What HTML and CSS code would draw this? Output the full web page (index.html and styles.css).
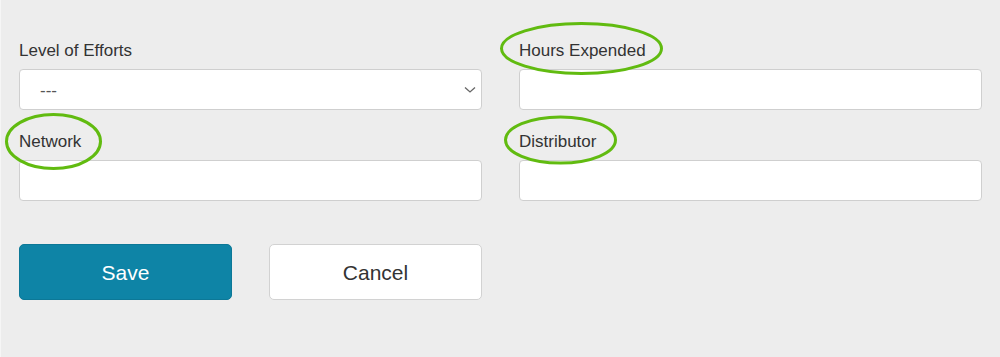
FILE: index.html
```html
<!DOCTYPE html>
<html lang="en">
<head>
  <meta charset="UTF-8">
  <meta name="viewport" content="width=device-width, initial-scale=1">
  <title>Effort Form</title>
  <link rel="stylesheet" href="styles.css">
</head>
<body>

<div class="page">
  <form class="form">
    <div class="fields">
      <div class="field">
        <label for="effort">Level of Efforts</label>
        <div class="select-wrap">
          <select id="effort">
            <option>---</option>
            <option>Low</option>
            <option>Medium</option>
            <option>High</option>
          </select>
          <svg class="chevron" width="12" height="8" viewBox="0 0 12 8">
            <path d="M1 1.5 L6 6 L11 1.5" fill="none" stroke="#666" stroke-width="1.3"/>
          </svg>
        </div>
      </div>

      <div class="field">
        <label for="hours">Hours Expended</label>
        <input id="hours" type="text">
      </div>

      <div class="field">
        <label for="network">Network</label>
        <input id="network" type="text">
      </div>

      <div class="field">
        <label for="distributor">Distributor</label>
        <input id="distributor" type="text">
      </div>
    </div>

    <div class="actions">
      <button type="button" class="save">Save</button>
      <button type="button" class="cancel">Cancel</button>
    </div>
  </form>

  <!-- highlight marks drawn over the labels -->
  <svg class="marks" width="1000" height="357" viewBox="0 0 1000 357">
    <ellipse cx="581.5" cy="48.5" rx="80" ry="25" />
    <ellipse cx="53.5" cy="141.5" rx="47" ry="27" />
    <ellipse cx="560.5" cy="140" rx="55" ry="23" />
  </svg>
</div>

</body>
</html>
```

FILE: styles.css
```css
body {
  margin: 0;
  background: #ededed;
  font-family: 'Liberation Sans', Arial, sans-serif;
  color: #333;
}

.page {
  position: relative;
  height: 357px;
  border-left: 1px solid #f6f6f6;
  box-sizing: border-box;
}

.form {
  padding: 38px 18px 0 18px;
}

.fields {
  display: grid;
  grid-template-columns: 463px 463px;
  column-gap: 37px;
  row-gap: 19px;
}

.field label {
  display: block;
  font-size: 17px;
  line-height: 23px;
  padding-top: 1px;
  margin-bottom: 7px;
  color: #333;
}

.field input,
.field select {
  display: block;
  width: 100%;
  height: 41px;
  box-sizing: border-box;
  border: 1px solid #cfcfcf;
  border-radius: 4px;
  background: #fff;
  font-family: inherit;
  font-size: 17px;
  color: #555;
  outline: none;
}

.select-wrap {
  position: relative;
}

.field select {
  appearance: none;
  -webkit-appearance: none;
  padding: 1px 0 0 20px;
}

.chevron {
  position: absolute;
  right: 6px;
  top: 17px;
  pointer-events: none;
}

.actions {
  display: flex;
  gap: 37px;
  margin-top: 43px;
}

.actions button {
  width: 213px;
  height: 56px;
  box-sizing: border-box;
  border-radius: 5px;
  font-family: inherit;
  font-size: 21px;
  padding-top: 2px;
  cursor: pointer;
}

button.save {
  background: #0e84a6;
  border: 1px solid #0c7897;
  color: #fff;
}

button.cancel {
  background: #fff;
  border: 1px solid #d2d2d2;
  color: #333;
}

.marks {
  position: absolute;
  top: 0;
  left: -1px;
  pointer-events: none;
}

.marks ellipse {
  fill: none;
  stroke: #61bb10;
  stroke-width: 3;
}
```
